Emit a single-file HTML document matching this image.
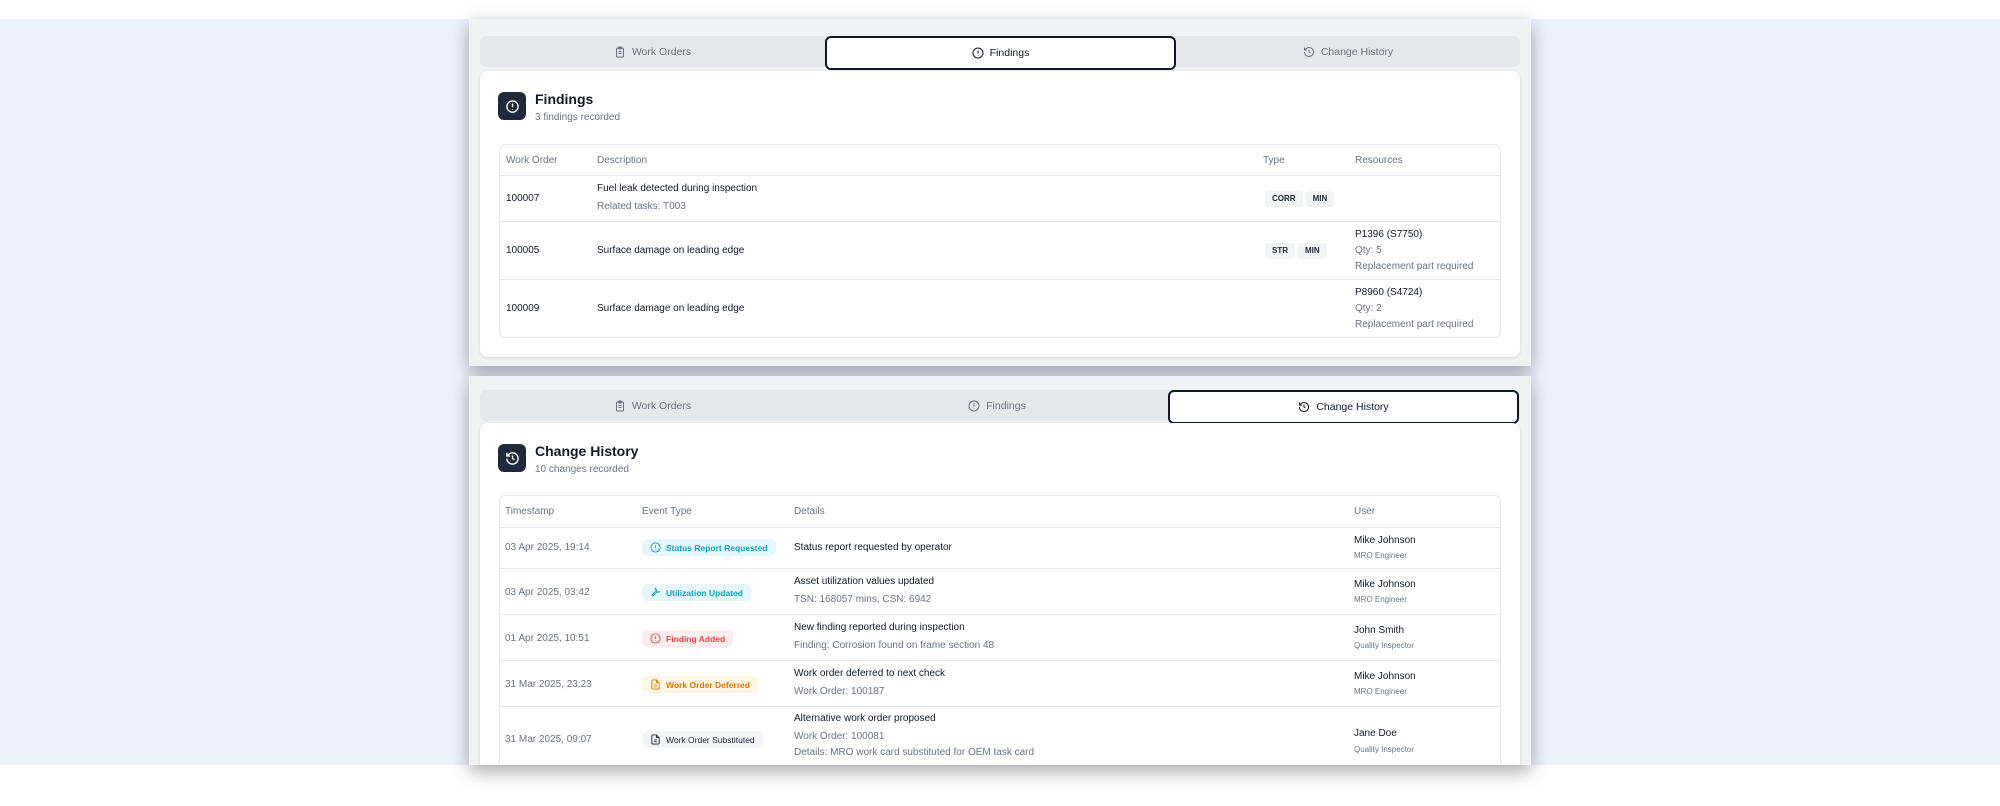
<!DOCTYPE html>
<html><head><meta charset="utf-8">
<style>
*{box-sizing:border-box;margin:0;padding:0}
body{width:2000px;height:806px;overflow:hidden;background:#fff;font-family:"Liberation Sans",sans-serif;color:#1f2937;position:relative}
.bg{position:absolute;left:0;top:19px;width:2000px;height:746px;background:#eef2fd}
.panel{position:absolute;left:469px;width:1062px;background:#f1f2f4;box-shadow:0 6px 18px rgba(0,0,0,.35);overflow:hidden}
.tabs{position:absolute;left:11px;width:1040px;height:31px;background:#e5e7eb;border-radius:6px}
.tab{position:absolute;top:0;height:31px;display:flex;align-items:center;justify-content:center;font-size:10.5px;color:#6b7280;gap:6px}
.tab.active{background:#fff;border:2px solid #111827;border-radius:6px;color:#111827;height:34px;top:0}
.tab svg{width:12px;height:12px}
.card{position:absolute;left:11px;width:1040px;background:#fff;border-radius:8px;box-shadow:0 1px 3px rgba(0,0,0,.12)}
.hicon{position:absolute;left:18px;width:28px;height:28px;background:#1e293b;border-radius:6px;display:flex;align-items:center;justify-content:center}
.hicon svg{width:15px;height:15px}
.htitle{position:absolute;left:55px;font-size:14px;font-weight:bold;color:#111827}
.hsub{position:absolute;left:55px;font-size:10px;color:#6b7280}
.tbl{position:absolute;left:19px;width:1002px;border:1px solid #e5e7eb;border-radius:6px}
.row{position:relative;border-top:1px solid #e5e7eb}
.row:first-child{border-top:none}
.c{position:absolute;font-size:10px;color:#111827;line-height:15px}
.hd .c{color:#6b7280}
.g{color:#6b7280}
.tag{display:inline-block;background:#f1f3f5;font-size:8px;font-weight:bold;padding:0 7px;height:16px;line-height:16px;border-radius:4px;margin-right:3px;color:#1f2937}
.badge{position:absolute;height:17px;border-radius:5px;font-size:8.5px;font-weight:bold;display:flex;align-items:center;gap:5px;padding:0 8px}
.badge svg{width:11px;height:11px}
.sm{font-size:8px;color:#6b7280}
</style></head><body>
<div class="bg"></div>

<!-- Panel 1 -->
<div class="panel" style="top:19px;height:347px">
  <div class="tabs" style="top:17px">
    <div class="tab" style="left:0;width:345px"><svg viewBox="0 0 24 24" fill="none" stroke="#6b7280" stroke-width="2"><rect x="5" y="4" width="14" height="18" rx="2"/><rect x="9" y="2" width="6" height="4" rx="1"/><path d="M9 11h6M9 15h6"/></svg>Work Orders</div>
    <div class="tab active" style="left:345px;width:351px"><svg viewBox="0 0 24 24" fill="none" stroke="#111827" stroke-width="2"><circle cx="12" cy="12" r="10"/><path d="M12 7v6M12 16v1"/></svg>Findings</div>
    <div class="tab" style="left:696px;width:344px"><svg viewBox="0 0 24 24" fill="none" stroke="#6b7280" stroke-width="2"><path d="M3 12a9 9 0 1 0 3-6.7L3 8"/><path d="M3 3v5h5M12 7v5l3 2"/></svg>Change History</div>
  </div>
  <div class="card" style="top:52px;height:286px">
    <div class="hicon" style="top:21px"><svg viewBox="0 0 24 24" fill="none" stroke="#fff" stroke-width="2.2"><circle cx="12" cy="12" r="9"/><path d="M12 7v6M12 16v1"/></svg></div>
    <div class="htitle" style="top:20px">Findings</div>
    <div class="hsub" style="top:41px">3 findings recorded</div>
    <div class="tbl" style="top:73px">
      <div class="row hd" style="height:30px"><div class="c" style="left:6px;top:8px">Work Order</div><div class="c" style="left:97px;top:8px">Description</div><div class="c" style="left:763px;top:8px">Type</div><div class="c" style="left:855px;top:8px">Resources</div></div>
      <div class="row" style="height:46px"><div class="c" style="left:6px;top:15px">100007</div><div class="c" style="left:97px;top:5px">Fuel leak detected during inspection</div><div class="c g" style="left:97px;top:23px">Related tasks: T003</div><div class="c" style="left:765px;top:15px"><span class="tag">CORR</span><span class="tag">MIN</span></div></div>
      <div class="row" style="height:58px"><div class="c" style="left:6px;top:21px">100005</div><div class="c" style="left:97px;top:21px">Surface damage on leading edge</div><div class="c" style="left:765px;top:21px"><span class="tag">STR</span><span class="tag">MIN</span></div><div class="c" style="left:855px;top:5px">P1396 (S7750)</div><div class="c g" style="left:855px;top:21px">Qty: 5</div><div class="c g" style="left:855px;top:37px">Replacement part required</div></div>
      <div class="row" style="height:58px"><div class="c" style="left:6px;top:21px">100009</div><div class="c" style="left:97px;top:21px">Surface damage on leading edge</div><div class="c" style="left:855px;top:5px">P8960 (S4724)</div><div class="c g" style="left:855px;top:21px">Qty: 2</div><div class="c g" style="left:855px;top:37px">Replacement part required</div></div>
    </div>
  </div>
</div>

<!-- Panel 2 -->
<div class="panel" style="top:376px;height:389px">
  <div class="tabs" style="top:14px">
    <div class="tab" style="left:0;width:345px"><svg viewBox="0 0 24 24" fill="none" stroke="#6b7280" stroke-width="2"><rect x="5" y="4" width="14" height="18" rx="2"/><rect x="9" y="2" width="6" height="4" rx="1"/><path d="M9 11h6M9 15h6"/></svg>Work Orders</div>
    <div class="tab" style="left:345px;width:344px"><svg viewBox="0 0 24 24" fill="none" stroke="#6b7280" stroke-width="2"><circle cx="12" cy="12" r="10"/><path d="M12 7v6M12 16v1"/></svg>Findings</div>
    <div class="tab active" style="left:688px;width:351px"><svg viewBox="0 0 24 24" fill="none" stroke="#111827" stroke-width="2"><path d="M3 12a9 9 0 1 0 3-6.7L3 8"/><path d="M3 3v5h5M12 7v5l3 2"/></svg>Change History</div>
  </div>
  <div class="card" style="top:47px;height:360px">
    <div class="hicon" style="top:21px"><svg viewBox="0 0 24 24" fill="none" stroke="#fff" stroke-width="2.2"><path d="M3 12a9 9 0 1 0 3-6.7L3 8"/><path d="M3 3v5h5M12 7v5l3 2"/></svg></div>
    <div class="htitle" style="top:20px">Change History</div>
    <div class="hsub" style="top:41px">10 changes recorded</div>
    <div class="tbl" style="top:72px;border-bottom:none">
      <div class="row hd" style="height:31px"><div class="c" style="left:5px;top:8px">Timestamp</div><div class="c" style="left:142px;top:8px">Event Type</div><div class="c" style="left:294px;top:8px">Details</div><div class="c" style="left:854px;top:8px">User</div></div>
      <div class="row" style="height:41px"><div class="c g" style="left:5px;top:12px">03 Apr 2025, 19:14</div>
        <div class="badge" style="left:142px;top:11px;background:#e6f7fb;color:#0ea5c6"><svg viewBox="0 0 24 24" fill="none" stroke="#0ea5c6" stroke-width="2"><circle cx="12" cy="12" r="10"/><path d="M12 7v6M12 16v1"/></svg>Status Report Requested</div>
        <div class="c" style="left:294px;top:12px">Status report requested by operator</div>
        <div class="c" style="left:854px;top:5px">Mike Johnson</div><div class="c sm" style="left:854px;top:20px">MRO Engineer</div></div>
      <div class="row" style="height:46px"><div class="c g" style="left:5px;top:16px">03 Apr 2025, 03:42</div>
        <div class="badge" style="left:142px;top:15px;background:#e6f7fb;color:#0ea5c6"><svg viewBox="0 0 24 24" fill="none" stroke="#0ea5c6" stroke-width="2"><path d="M14.7 6.3a4 4 0 0 0 5 5L21 10a6 6 0 0 1-8-8l-1.3 1.3a4 4 0 0 0 3 3zM13 9l-9 9 2 2 9-9"/></svg>Utilization Updated</div>
        <div class="c" style="left:294px;top:5px">Asset utilization values updated</div><div class="c g" style="left:294px;top:23px">TSN: 168057 mins, CSN: 6942</div>
        <div class="c" style="left:854px;top:8px">Mike Johnson</div><div class="c sm" style="left:854px;top:23px">MRO Engineer</div></div>
      <div class="row" style="height:46px"><div class="c g" style="left:5px;top:16px">01 Apr 2025, 10:51</div>
        <div class="badge" style="left:142px;top:15px;background:#fdeeee;color:#ef4444"><svg viewBox="0 0 24 24" fill="none" stroke="#ef4444" stroke-width="2"><circle cx="12" cy="12" r="10"/><path d="M12 7v6M12 16v1"/></svg>Finding Added</div>
        <div class="c" style="left:294px;top:5px">New finding reported during inspection</div><div class="c g" style="left:294px;top:23px">Finding: Corrosion found on frame section 48</div>
        <div class="c" style="left:854px;top:8px">John Smith</div><div class="c sm" style="left:854px;top:23px">Quality Inspector</div></div>
      <div class="row" style="height:46px"><div class="c g" style="left:5px;top:16px">31 Mar 2025, 23:23</div>
        <div class="badge" style="left:142px;top:15px;background:#fef6e4;color:#d97706"><svg viewBox="0 0 24 24" fill="none" stroke="#d97706" stroke-width="2"><path d="M14 2H6a2 2 0 0 0-2 2v16a2 2 0 0 0 2 2h12a2 2 0 0 0 2-2V8z"/><path d="M14 2v6h6M9 13h6M9 17h6"/></svg>Work Order Deferred</div>
        <div class="c" style="left:294px;top:5px">Work order deferred to next check</div><div class="c g" style="left:294px;top:23px">Work Order: 100187</div>
        <div class="c" style="left:854px;top:8px">Mike Johnson</div><div class="c sm" style="left:854px;top:23px">MRO Engineer</div></div>
      <div class="row" style="height:70px"><div class="c g" style="left:5px;top:25px">31 Mar 2025, 09:07</div>
        <div class="badge" style="left:142px;top:24px;background:#f3f4f6;color:#1f2937;font-weight:normal"><svg viewBox="0 0 24 24" fill="none" stroke="#1f2937" stroke-width="2"><path d="M14 2H6a2 2 0 0 0-2 2v16a2 2 0 0 0 2 2h12a2 2 0 0 0 2-2V8z"/><path d="M14 2v6h6M9 13h6M9 17h6"/></svg>Work Order Substituted</div>
        <div class="c" style="left:294px;top:4px">Alternative work order proposed</div><div class="c g" style="left:294px;top:22px">Work Order: 100081</div><div class="c g" style="left:294px;top:38px">Details: MRO work card substituted for OEM task card</div>
        <div class="c" style="left:854px;top:19px">Jane Doe</div><div class="c sm" style="left:854px;top:35px">Quality Inspector</div></div>
    </div>
  </div>
</div>
</body></html>
